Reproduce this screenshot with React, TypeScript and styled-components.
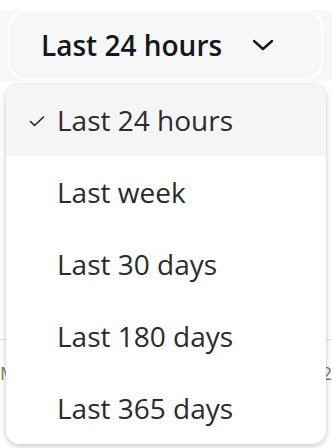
import React from 'react'
import styled, {createGlobalStyle} from 'styled-components'

const GlobalStyle = createGlobalStyle`
    html, body {
        margin: 0;
        padding: 0;
        background: #ffffff;
        font-family: 'Open Sans', 'Noto Sans', sans-serif;
    }
`

const Page = styled.div`
    position: relative;
    width: 332px;
    height: 448px;
    overflow: hidden;
    padding-top: 10px;
    box-sizing: border-box;
`

const HeaderBand = styled.div`
    height: 71px;
    background: #f7f7f7;
    padding: 0 9px 0 8px;
`

const RangeButton = styled.button`
    display: flex;
    align-items: center;
    gap: 30px;
    width: 100%;
    height: 70px;
    box-sizing: border-box;
    padding: 0 0 0 31px;
    border: 2px solid #ffffff;
    border-radius: 18px;
    background: transparent;
    font-family: inherit;
    font-size: 28px;
    font-weight: 600;
    color: #101820;
    cursor: pointer;

    > svg {
        margin-top: 0;
    }
`

const Chart = styled.div`
    margin-top: 258px;
`

const GridLine = styled.div`
    height: 1px;
    background: #e3e3e3;
`

const AxisLabels = styled.div`
    display: flex;
    justify-content: space-between;
    margin-top: 21px;
    font-size: 18px;
    color: #7a7a7a;
    line-height: 24px;
`

const Menu = styled.ul`
    position: absolute;
    top: 84px;
    left: 6px;
    width: 320px;
    margin: 0;
    padding: 0;
    list-style: none;
    background: #ffffff;
    border-radius: 14px;
    overflow: hidden;
    box-shadow: 0 2px 6px rgba(0, 0, 0, 0.22), 0 0 2px rgba(0, 0, 0, 0.08);
`

const MenuItem = styled.li<{ $selected?: boolean }>`
    position: relative;
    display: flex;
    align-items: center;
    height: 72px;
    padding-left: 51px;
    font-size: 28px;
    color: #2b2b2b;
    background: ${({$selected}) => ($selected ? '#f5f5f5' : '#ffffff')};

    > svg {
        position: absolute;
        left: 23px;
        top: 32px;
    }
`

const options = ['Last 24 hours', 'Last week', 'Last 30 days', 'Last 180 days', 'Last 365 days']

function Chevron() {
    return (
        <svg width="22" height="12" viewBox="0 0 22 12" fill="none">
            <polyline points="2,2 11,10 20,2" stroke="#101820" strokeWidth="2.4" strokeLinecap="round"
                      strokeLinejoin="round"/>
        </svg>
    )
}

function Check() {
    return (
        <svg width="16" height="11" viewBox="0 0 16 11" fill="none">
            <polyline points="1.5,5.5 5.5,9.5 14.5,1" stroke="#222" strokeWidth="1.6" strokeLinecap="round"
                      strokeLinejoin="round"/>
        </svg>
    )
}

export default function App() {
    const selected = 'Last 24 hours'

    return (
        <Page>
            <GlobalStyle/>
            <HeaderBand>
                <RangeButton>
                    {selected}
                    <Chevron/>
                </RangeButton>
            </HeaderBand>

            <Chart>
                <GridLine/>
                <AxisLabels>
                    <span>Mar 1</span>
                    <span>Apr 2</span>
                </AxisLabels>
            </Chart>

            <Menu>
                {options.map(option => (
                    <MenuItem key={option} $selected={option === selected}>
                        {option === selected && <Check/>}
                        {option}
                    </MenuItem>
                ))}
            </Menu>
        </Page>
    )
}
